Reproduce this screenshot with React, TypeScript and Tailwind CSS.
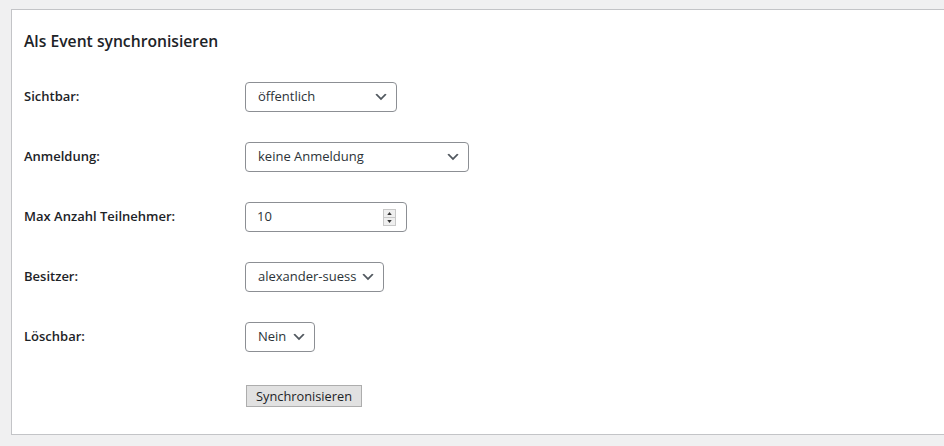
import type { ReactNode } from 'react'

const font = { fontFamily: '"Open Sans", "Noto Sans", sans-serif' }

function Chevron() {
  return (
    <svg viewBox="0 0 20 20" className="h-[16px] w-[16px] shrink-0" fill="#50575e">
      <path d="M5 6l5 5 5-5 2 1-7 7-7-7 2-1z" />
    </svg>
  )
}

function SelectBox({ value, width }: { value: string; width: string }) {
  return (
    <div
      className={`flex h-[30px] items-center justify-between gap-[2px] rounded-[4px] border border-[#8c8f94] bg-white pl-[12px] pr-[7px] text-[13px] text-[#2c3338] ${width}`}
    >
      <span className="whitespace-nowrap">{value}</span>
      <Chevron />
    </div>
  )
}

function NumberBox({ value }: { value: string }) {
  return (
    <div className="flex h-[30px] w-[162px] items-center justify-between rounded-[4px] border border-[#8c8f94] bg-white pl-[11px] pr-[10px] text-[13px] text-[#2c3338]">
      <span>{value}</span>
      <div className="flex h-[17px] w-[13px] flex-col border border-[#c8c8c8] bg-[#efefef]">
        <div className="flex flex-1 items-center justify-center border-b border-[#c8c8c8]">
          <svg viewBox="0 0 6 4" className="h-[3px] w-[5px]" fill="#333">
            <path d="M0 4L3 0L6 4Z" />
          </svg>
        </div>
        <div className="flex flex-1 items-center justify-center">
          <svg viewBox="0 0 6 4" className="h-[3px] w-[5px]" fill="#333">
            <path d="M0 0L6 0L3 4Z" />
          </svg>
        </div>
      </div>
    </div>
  )
}

function Row({ label, children }: { label: string; children: ReactNode }) {
  return (
    <div className="flex h-[30px] items-center">
      <div className="w-[221px] shrink-0 text-[13px] font-semibold text-[#1d2327]">{label}</div>
      {children}
    </div>
  )
}

export default function App() {
  return (
    <div className="h-[446px] w-full overflow-hidden bg-[#f0f0f1] pl-[11px] pt-[9px]" style={font}>
      <div className="h-[426px] border border-r-0 border-[#c3c4c7] bg-white pl-[12px] pt-[19px]">
        <h2 className="text-[15.7px] font-semibold leading-[24px] text-[#1d2327]">Als Event synchronisieren</h2>

        <div className="mt-[29px] flex flex-col gap-[30px]">
          <Row label="Sichtbar:">
            <SelectBox value="öffentlich" width="w-[152px]" />
          </Row>
          <Row label="Anmeldung:">
            <SelectBox value="keine Anmeldung" width="w-[224px]" />
          </Row>
          <Row label="Max Anzahl Teilnehmer:">
            <NumberBox value="10" />
          </Row>
          <Row label="Besitzer:">
            <SelectBox value="alexander-suess" width="w-[139px]" />
          </Row>
          <Row label="Löschbar:">
            <SelectBox value="Nein" width="w-[70px]" />
          </Row>
        </div>

        <div className="mt-[31px] pl-[222px]">
          <button className="h-[22px] border border-[#adadad] bg-[#e1e1e1] px-[9px] text-[12.8px] leading-[20px] text-[#1d2327]">
            Synchronisieren
          </button>
        </div>
      </div>
    </div>
  )
}
